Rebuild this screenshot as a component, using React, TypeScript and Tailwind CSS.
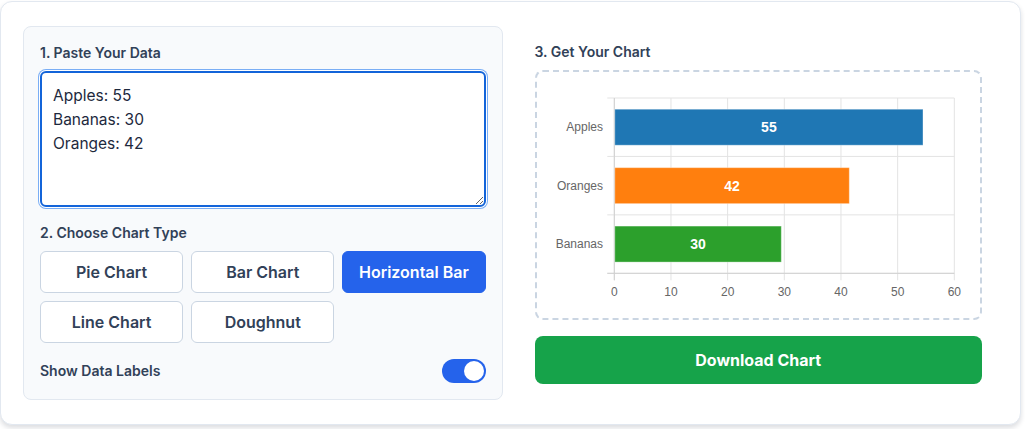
import { useState } from "react";

const CHART_TYPES = ["Pie Chart", "Bar Chart", "Horizontal Bar", "Line Chart", "Doughnut"] as const;

const DATA = [
  { label: "Apples", value: 55, color: "#1f77b4" },
  { label: "Oranges", value: 42, color: "#ff7f0e" },
  { label: "Bananas", value: 30, color: "#2ca02c" },
];

// plot geometry inside the dashed preview box
const X0 = 77.3;
const UNIT = 5.667;
const TOP = 26;
const BOTTOM = 201.3;
const ROW = (BOTTOM - TOP) / DATA.length;
const BAR_H = 36;
const TICKS = [0, 10, 20, 30, 40, 50, 60];
const CHART_FONT = '"Liberation Sans", Arial, sans-serif';

function HorizontalBarChart() {
  return (
    <svg width={443} height={246} viewBox="0 0 443 246" className="block">
      {TICKS.map((tick) => {
        const x = X0 + tick * UNIT;
        return (
          <line key={`v${tick}`} x1={x} y1={TOP} x2={x} y2={BOTTOM + 7} stroke="#e3e3e3" strokeWidth={1} />
        );
      })}
      {[0, 1, 2, 3].map((i) => {
        const y = TOP + i * ROW;
        return <line key={`h${i}`} x1={X0 - 7} y1={y} x2={X0 + 60 * UNIT} y2={y} stroke="#e3e3e3" strokeWidth={1} />;
      })}
      <line x1={X0} y1={TOP} x2={X0} y2={BOTTOM + 7} stroke="#d0d0d0" strokeWidth={1} />
      <line x1={X0 - 7} y1={BOTTOM} x2={X0 + 60 * UNIT} y2={BOTTOM} stroke="#d0d0d0" strokeWidth={1} />

      {DATA.map((item, i) => {
        const cy = TOP + ROW * i + ROW / 2;
        const x1 = X0 + 0.5;
        const w = item.value * UNIT - 3.5;
        return (
          <g key={item.label}>
            <rect
              x={x1}
              y={cy - BAR_H / 2}
              width={w}
              height={BAR_H}
              fill={item.color}
              stroke="rgba(255,255,255,0.35)"
              strokeWidth={1}
            />
            <text
              x={x1 + w / 2}
              y={cy}
              dy="0.35em"
              textAnchor="middle"
              fill="#ffffff"
              fontFamily={CHART_FONT}
              fontSize={14}
              fontWeight={700}
            >
              {item.value}
            </text>
            <text
              x={66}
              y={cy}
              dy="0.35em"
              textAnchor="end"
              fill="#666666"
              fontFamily={CHART_FONT}
              fontSize={12}
            >
              {item.label}
            </text>
          </g>
        );
      })}

      {TICKS.map((tick) => (
        <text
          key={`t${tick}`}
          x={X0 + tick * UNIT}
          y={220}
          dy="0.35em"
          textAnchor="middle"
          fill="#666666"
          fontFamily={CHART_FONT}
          fontSize={12}
        >
          {tick}
        </text>
      ))}
    </svg>
  );
}

export default function App() {
  const [text, setText] = useState("Apples: 55\nBananas: 30\nOranges: 42");
  const [chartType, setChartType] = useState<string>("Horizontal Bar");
  const [showLabels, setShowLabels] = useState(true);

  return (
    <div className="min-h-screen bg-white font-['Inter',sans-serif] text-slate-700">
      <div className="mt-px w-[1021px] rounded-xl border border-slate-200 bg-white px-[22px] py-6 shadow-[0_3px_5px_rgba(15,23,42,0.14)]">
        <div className="grid grid-cols-2 gap-4">
          <div className="rounded-lg border border-slate-200 bg-slate-50 p-4">
            <div className="mb-2 text-sm font-semibold leading-5 text-slate-700">1. Paste Your Data</div>
            <textarea
              value={text}
              onChange={(event) => setText(event.target.value)}
              spellCheck={false}
              className="block h-[136px] w-full resize-y rounded-md border-2 border-[#1364d9] bg-white px-[11px] py-[11px] text-[15.5px] leading-6 text-slate-800 shadow-[0_0_0_1px_#ffffff,0_0_0_2px_#7aaef5] outline-none"
            />

            <div className="mb-2 mt-4 text-sm font-semibold leading-5 text-slate-700">2. Choose Chart Type</div>
            <div className="grid grid-cols-3 gap-2">
              {CHART_TYPES.map((type) => {
                const active = type === chartType;
                return (
                  <button
                    key={type}
                    type="button"
                    onClick={() => setChartType(type)}
                    className={
                      active
                        ? "rounded-md border border-[#2563eb] bg-[#2563eb] py-2 text-base font-semibold leading-6 text-white"
                        : "rounded-md border border-slate-300 bg-white py-2 text-base font-semibold leading-6 text-slate-700"
                    }
                  >
                    {type}
                  </button>
                );
              })}
            </div>

            <div className="mt-4 flex items-center justify-between">
              <span className="text-sm font-semibold text-slate-700">Show Data Labels</span>
              <button
                type="button"
                onClick={() => setShowLabels(!showLabels)}
                className={
                  showLabels
                    ? "flex h-6 w-11 items-center justify-end rounded-full bg-[#2563eb] px-[2px]"
                    : "flex h-6 w-11 items-center justify-start rounded-full bg-slate-300 px-[2px]"
                }
                aria-label="Show Data Labels"
              >
                <span className="h-5 w-5 rounded-full bg-white" />
              </button>
            </div>
          </div>

          <div className="p-4">
            <div className="mb-2 text-sm font-semibold leading-5 text-slate-700">3. Get Your Chart</div>
            <div className="h-[250px] rounded-lg border-2 border-dashed border-slate-300 bg-white">
              <HorizontalBarChart />
            </div>
            <button
              type="button"
              className="mt-4 w-full rounded-lg bg-[#16a34a] py-3 text-base font-bold leading-6 text-white"
            >
              Download Chart
            </button>
          </div>
        </div>
      </div>
    </div>
  );
}
